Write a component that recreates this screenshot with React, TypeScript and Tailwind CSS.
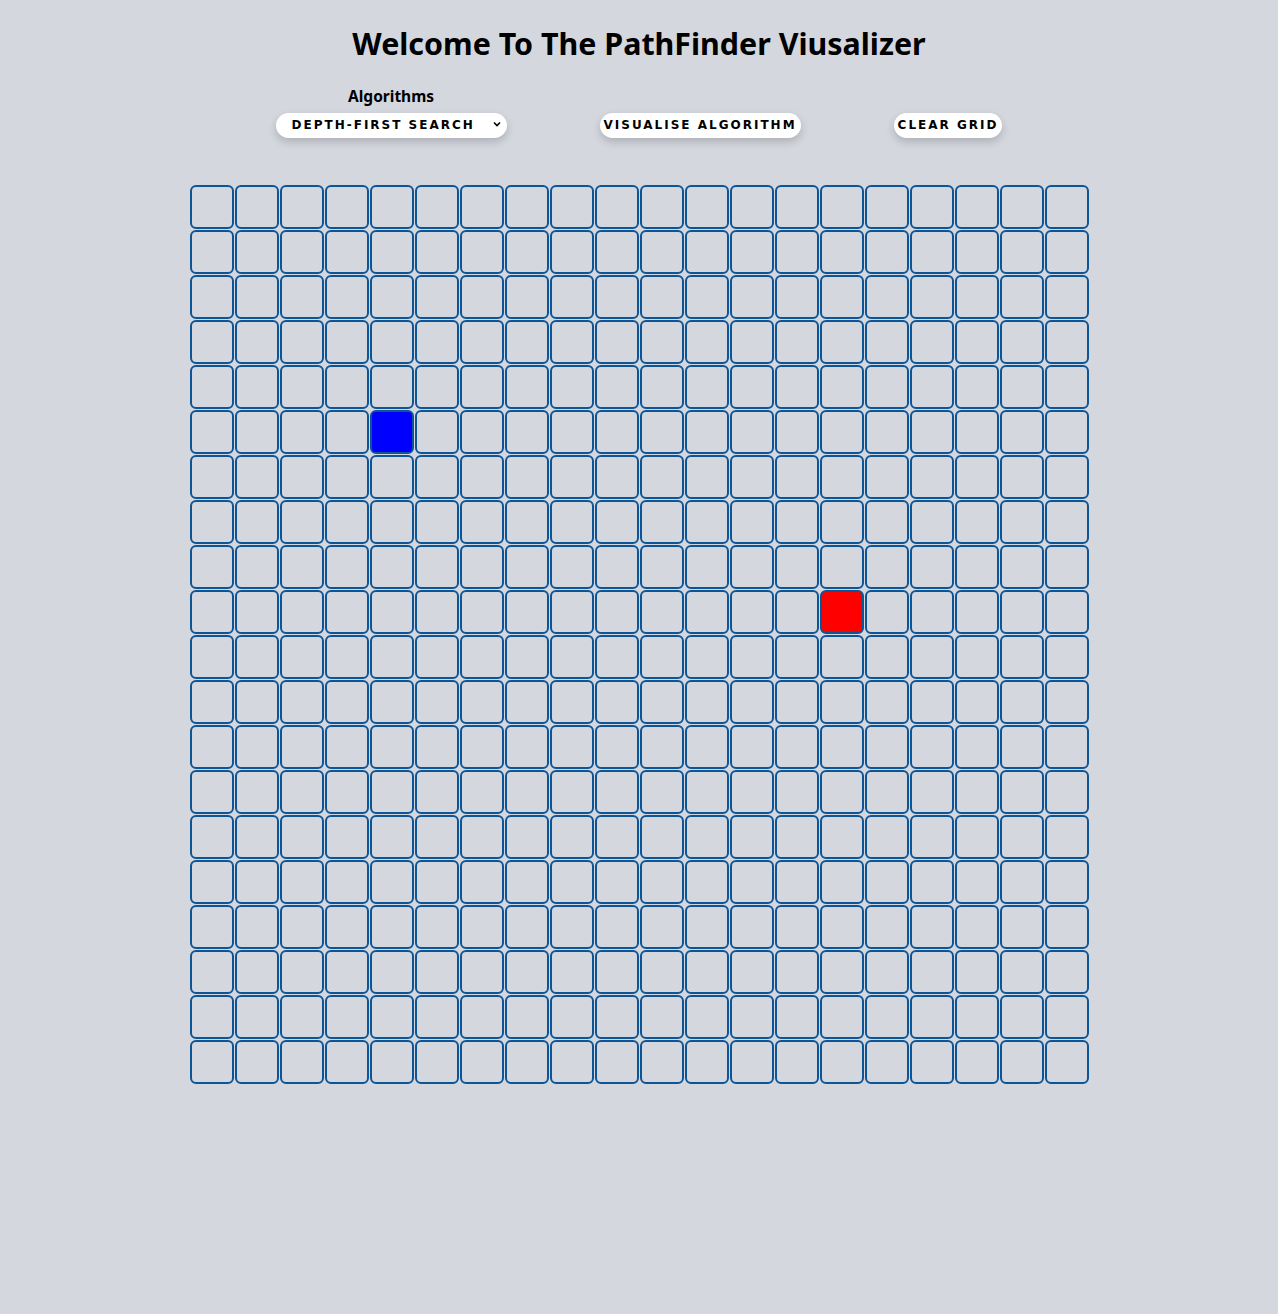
import { useState } from "react";

const ROWS = 20;
const COLS = 20;
const START = { row: 5, col: 4 };
const END = { row: 9, col: 14 };

export default function App() {
  const [algo, setAlgo] = useState("dfs");

  return (
    <div className="min-h-[1314px] bg-[#d4d7de] font-['Noto_Sans',sans-serif] text-black">
      <h1 className="pt-[24px] text-center text-[30.4px] font-bold leading-[40px]">
        Welcome To The PathFinder Viusalizer
      </h1>

      <div className="mt-[22px] flex items-end justify-center gap-[93px]">
        <div className="flex w-[231px] flex-col items-center">
          <label className="mb-[5px] text-[15.5px] font-bold leading-[20px]">Algorithms</label>
          <div className="relative w-full">
            <select
              value={algo}
              onChange={(e) => setAlgo(e.target.value)}
              className="h-[25px] w-full appearance-none rounded-full bg-white pl-[16px] pr-[24px] font-['DejaVu_Sans',sans-serif] text-[12px] font-bold uppercase tracking-[2px] shadow-[0_4px_8px_rgba(0,0,0,0.18)] outline-none"
            >
              <option value="dfs">Depth-First Search</option>
              <option value="bfs">Breadth-First Search</option>
              <option value="dijkstra">Dijkstra</option>
            </select>
            <svg
              className="pointer-events-none absolute right-[5px] top-[8px]"
              width="10"
              height="10"
              viewBox="0 0 10 10"
              fill="none"
              stroke="black"
              strokeWidth="1.6"
            >
              <path d="M2 3.5 L5 6.5 L8 3.5" />
            </svg>
          </div>
        </div>

        <button className="h-[25px] rounded-full bg-white px-[4px] font-['DejaVu_Sans',sans-serif] text-[12px] font-bold uppercase tracking-[2px] shadow-[0_4px_8px_rgba(0,0,0,0.18)]">
          Visualise Algorithm
        </button>

        <button className="h-[25px] rounded-full bg-white px-[4px] font-['DejaVu_Sans',sans-serif] text-[12px] font-bold uppercase tracking-[2px] shadow-[0_4px_8px_rgba(0,0,0,0.18)]">
          Clear Grid
        </button>
      </div>

      <div className="mx-auto mt-[47px] grid w-[900px] grid-cols-[repeat(20,45px)]">
        {Array.from({ length: ROWS * COLS }).map((_, i) => {
          const r = Math.floor(i / COLS);
          const c = i % COLS;
          const isStart = r === START.row && c === START.col;
          const isEnd = r === END.row && c === END.col;
          return (
            <div
              key={i}
              className={
                "mb-[1px] ml-[1px] h-[44px] w-[44px] rounded-[6px] border-2 border-[#0d5597] " +
                (isStart ? "bg-[#0000ff]" : isEnd ? "bg-[#ff0000]" : "bg-transparent")
              }
            />
          );
        })}
      </div>
    </div>
  );
}
